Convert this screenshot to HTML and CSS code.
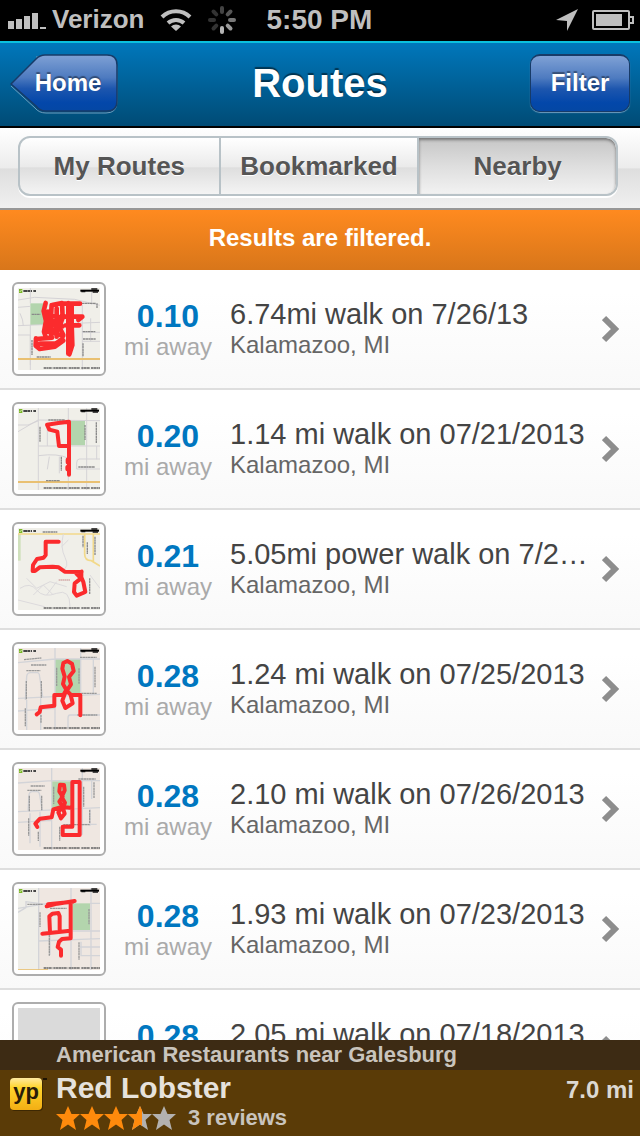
FILE: index.html
```html
<!DOCTYPE html>
<html lang="en">
<head>
    <meta charset="UTF-8">
    <meta name="viewport" content="width=device-width, initial-scale=1.0">
    <title>Routes</title>
    <link rel="stylesheet" href="styles.css">
</head>
<body>
    <svg class="defs" aria-hidden="true">
        <defs>
            <linearGradient id="homeFill" x1="0" y1="0" x2="0" y2="1">
                <stop offset="0" stop-color="#7fa1d5"/>
                <stop offset="0.4" stop-color="#4e7bc0"/>
                <stop offset="0.6" stop-color="#1d56ae"/>
                <stop offset="0.85" stop-color="#0347aa"/>
                <stop offset="1" stop-color="#0447a4"/>
            </linearGradient>
            <linearGradient id="ypFill" x1="0" y1="0" x2="0" y2="1">
                <stop offset="0" stop-color="#ffe9a0"/>
                <stop offset="0.3" stop-color="#ffd52c"/>
                <stop offset="1" stop-color="#f3ae14"/>
            </linearGradient>
            <symbol id="chevron" viewBox="0 0 18 28">
                <path d="M2 3l11 11L2 25" fill="none" stroke="#8d8d8d" stroke-width="6"/>
            </symbol>
            <symbol id="star" viewBox="0 0 24 24">
                <path d="M12 0l3.500 8H24l-6.500 6L20 24l-8-5.500L4 24l2.500-10L0 8h8.500z"/>
            </symbol>
            <!-- logo, scale bar and credit line shared by all map thumbs -->
            <symbol id="mapMarks" viewBox="54 39 246 246">
                <rect x="57" y="42" width="10" height="12" fill="#7cb928"/>
                <path d="M59 51l6-6" stroke="#fff" stroke-width="2"/>
                <path d="M70 48h38" stroke="#444" stroke-width="6" stroke-dasharray="12 1 8 2 3 4"/>
                <path d="M241 47h56" stroke="#000" stroke-width="6"/>
                <path d="M244 50h12m18-8h18m-14 9h16" stroke="#111" stroke-width="4"/>
                <path d="M131 279h26m3 0h42m4 0h34m4 0h26m3 0h27" stroke="#666" stroke-width="5" stroke-dasharray="7 1"/>
            </symbol>
        </defs>
    </svg>

    <div class="status">
        <svg class="signal" viewBox="0 0 38 16" width="38" height="16"><path d="M0 8h6v8H0zM8 6h6v10H8zM16 3h6v13h-6zM24 0h6v16h-6zM32 14h6v2h-6z" fill="#bfbfbf"/></svg>
        <span class="carrier">Verizon</span>
        <svg class="wifi" viewBox="0 0 32 24" width="32" height="24" fill="none" stroke="#bfbfbf" stroke-width="4"><path d="M2 9a20 20 0 0 1 28 0M8 15a12 12 0 0 1 16 0"/><path d="M16 23l-5-4.500a7 7 0 0 1 10 0z" fill="#bfbfbf" stroke="none"/></svg>
        <svg class="spinner" viewBox="-14 -14 28 28" width="28" height="28" stroke-width="4" stroke-linecap="round">
            <path d="M0-8v-4" stroke="#444"/>
            <path d="M5.700-5.700l2.800-2.800" stroke="#555"/>
            <path d="M8 0h4" stroke="#777"/>
            <path d="M5.700 5.700l2.800 2.800" stroke="#999"/>
            <path d="M0 8v4" stroke="#b5b5b5"/>
            <path d="M-5.700 5.700l-2.800 2.800" stroke="#333"/>
            <path d="M-8 0h-4" stroke="#333"/>
            <path d="M-5.700-5.700l-2.800-2.800" stroke="#333"/>
        </svg>
        <span class="clock">5:50 PM</span>
        <svg class="location" viewBox="0 0 24 24" width="24" height="24"><path d="M23 1L12 23V13L1 12z" fill="#bfbfbf"/></svg>
        <svg class="battery" viewBox="0 0 42 20" width="42" height="20"><rect x="1" y="1" width="36" height="18" rx="1" fill="none" stroke="#bfbfbf" stroke-width="2"/><path d="M4 4h26v12H4z" fill="#bfbfbf"/><path d="M38 7h3v6h-3" fill="none" stroke="#bfbfbf" stroke-width="2"/></svg>
    </div>

    <header class="navbar">
        <button class="nav-button home">
            <svg class="home-shape" viewBox="0 0 108 60" width="108" height="60"><path d="M26 3h70q11 0 11 11v34q0 11-11 11H36q-7 0-11-5L1 32" fill="none" stroke="#6f9dbd" stroke-width="1"/><path d="M35 1h62q10 0 10 10v36q0 10-10 10H35q-5 0-9-5L1 30 26 5q4-4 9-4z" fill="url(#homeFill)" stroke="#173b68" stroke-width="1.500"/></svg>
            <span>Home</span>
        </button>
        <h1>Routes</h1>
        <button class="nav-button filter">Filter</button>
    </header>

    <nav class="tabs">
        <div class="segments">
            <button>My Routes</button>
            <button>Bookmarked</button>
            <button class="active">Nearby</button>
        </div>
    </nav>

    <p class="banner">Results are filtered.</p>

    <ul class="routes">
        <li>
            <a class="route" href="#">
                <svg class="thumb" viewBox="54 39 246 246">
                    <path d="M54 39h246v246H54z" fill="#f0efe9"/>
                    <path d="M91 85h44v65H91z" fill="#b3d5ad"/>
                    <path d="M91 39v46m0 65v135M54 75l50-8 120 6 76 18M54 152l246-10M54 97l37-3M247 90v195M275 39v50M247 172h53M247 199h53M272 130v70M60 115q10 20 10 38M54 180h37v90" fill="none" stroke="#d5d3d6" stroke-width="3"/>
                    <path d="M54 252h246" stroke="#e9c071" stroke-width="6"/>
                    <path d="M95 118h26M246 85h42M248 170h38M249 192h38M110 246h42M96 195v45M249 205v40M291 85v14" stroke="#8a8a8a" stroke-width="4" stroke-dasharray="7 1"/>
                    <path d="M137 84l-6 24 7 30-6 32 6 18M155 90l-2 34v64M156 90l30-6 2 44-10 28 12 24-6 14-20 14M170 100v85M144 110v60M142 120l46 8-44 18 44 8-40 16 42 12M108 190l-1 22 12 10 46-7 25-18M110 192l46-4M120 206h44M205 84v152M192 86h48M195 125h52l-12 10M198 151h40M215 90v60l2 60-9 28" fill="none" stroke="#fb2b2d" stroke-width="14" stroke-linecap="round" stroke-linejoin="round"/>
                    <use href="#mapMarks" x="54" y="39" width="246" height="246"/>
                </svg>
                <span class="distance"><strong>0.10</strong><small>mi away</small></span>
                <span class="info"><b>6.74mi walk on 7/26/13</b><small>Kalamazoo, MI</small></span>
                <svg class="chevron"><use href="#chevron"/></svg>
            </a>
        </li>
        <li>
            <a class="route" href="#">
                <svg class="thumb" viewBox="54 39 246 246">
                    <path d="M54 39h246v246H54z" fill="#f0efe9"/>
                    <path d="M210 77h45v74h-45z" fill="#b3d5ad"/>
                    <path d="M115 39v246M54 110l60-35 186 2M54 90l30 0 30-12M205 39v246M260 39v246M115 153h185M115 182q60-8 90 8M142 85v68M178 185v50M290 153v40M148 185l-6 38M300 192h-62q-8 0-8 12v18h70" fill="none" stroke="#d5d3d6" stroke-width="3"/>
                    <path d="M54 261h246" stroke="#e9c071" stroke-width="6"/>
                    <path d="M145 75h50M120 95v45M255 90v45M289 82v62M184 185v42M235 216h50M138 257h42" stroke="#8a8a8a" stroke-width="4" stroke-dasharray="7 1"/>
                    <path d="M207 155V80l-32 4-34 5 7 15 24 6 5 43h30v86" fill="none" stroke="#fb2b2d" stroke-width="12" stroke-linecap="round" stroke-linejoin="round"/>
                    <path d="M205 195v6m-1 16v4" stroke="#fb2b2d" stroke-width="16" stroke-linecap="round"/>
                    <use href="#mapMarks" x="54" y="39" width="246" height="246"/>
                </svg>
                <span class="distance"><strong>0.20</strong><small>mi away</small></span>
                <span class="info"><b>1.14 mi walk on 07/21/2013</b><small>Kalamazoo, MI</small></span>
                <svg class="chevron"><use href="#chevron"/></svg>
            </a>
        </li>
        <li>
            <a class="route" href="#">
                <svg class="thumb" viewBox="54 39 246 246">
                    <path d="M54 39h246v246H54z" fill="#f0efe9"/>
                    <path d="M54 57h8v80h-8z" fill="#cfe0bb"/>
                    <path d="M54 57h246M254 57v60q0 20 20 20l26 16M280 57v85" fill="none" stroke="#f2d98a" stroke-width="5"/>
                    <path d="M60 220q30-20 50 5t60 10 40 40M80 190l30 30 40-20 50 15M54 255l80 20M190 57q-10 40 5 70t-10 40M205 75l-20 20M100 240l30-30 30 30M170 200l-30 40M270 180l30 40" fill="none" stroke="#dcdadc" stroke-width="3"/>
                    <path d="M128 51h44M249 62v35M262 82v35M285 65v56M269 190v48" stroke="#8a8a8a" stroke-width="4" stroke-dasharray="7 1"/>
                    <path d="M176 195h34" stroke="#c78a8a" stroke-width="3" stroke-dasharray="5 1"/>
                    <path d="M176 80h-39v40l-6 8-20 4-12 18-1 18h7l14-11 39-2 18 2 18 13 50 1v16l6 14 6 30-26 11-8-11 2-26 19-15-14-14 16-6" fill="none" stroke="#fb2b2d" stroke-width="12" stroke-linecap="round" stroke-linejoin="round"/>
                    <use href="#mapMarks" x="54" y="39" width="246" height="246"/>
                </svg>
                <span class="distance"><strong>0.21</strong><small>mi away</small></span>
                <span class="info"><b>5.05mi power walk on 7/24/13</b><small>Kalamazoo, MI</small></span>
                <svg class="chevron"><use href="#chevron"/></svg>
            </a>
        </li>
        <li>
            <a class="route" href="#">
                <svg class="thumb" viewBox="54 39 246 246">
                    <path d="M54 39h246v246H54z" fill="#efe7e1"/>
                    <path d="M165 72h75v106h-75z" fill="#b3d5ad"/>
                    <path d="M54 83l111-11h135M165 39v246M242 39v146M54 190l246-12M54 228l110-8M76 195l4-70q1-12 12-12h20q6 0 7 12l9 60M80 195v90M122 190v95M280 72v108M300 240h-90q-6 0-6 10v30" fill="none" stroke="#d3d4d8" stroke-width="4"/>
                    <path d="M72 74l52-5M93 90h46M79 107h42M240 67h50M170 98v56M237 100v46M285 95v62M79 138v56M124 138v50M76 220v54M123 240v24M244 175h46M232 240h60" stroke="#999" stroke-width="4" stroke-dasharray="7 1"/>
                    <path d="M241 241v-61h-29l6 25-22 14-9-22 8-22 18-27-6-22 14-18-5-22-14-8-12 6-3 17 7 24-5 22 12 21 12 12M200 163l-10 17h-27v32l-41 5-3 14-9 7" fill="none" stroke="#fb2b2d" stroke-width="12" stroke-linecap="round" stroke-linejoin="round"/>
                    <use href="#mapMarks" x="54" y="39" width="246" height="246"/>
                </svg>
                <span class="distance"><strong>0.28</strong><small>mi away</small></span>
                <span class="info"><b>1.24 mi walk on 07/25/2013</b><small>Kalamazoo, MI</small></span>
                <svg class="chevron"><use href="#chevron"/></svg>
            </a>
        </li>
        <li>
            <a class="route" href="#">
                <svg class="thumb" viewBox="54 39 246 246">
                    <path d="M54 39h246v246H54z" fill="#efe7e1"/>
                    <path d="M155 79h58v80h-58z" fill="#b3d5ad"/>
                    <path d="M54 84l101-7h145M155 39v246M247 39v200M54 170l246-12M54 202l100-6M84 170l3-50q1-10 10-10h15q6 0 7 10l8 48M90 175v90M120 170v105M275 77v55M270 162v50M290 208h-50" fill="none" stroke="#d3d4d8" stroke-width="4"/>
                    <path d="M92 93h42M82 106h42M235 72h52M161 95v52M251 95v60M282 82v48M88 122v48M125 122v44M86 190v52M115 230v28M269 165v40M179 215v42M190 209h80" stroke="#999" stroke-width="4" stroke-dasharray="7 1"/>
                    <path d="M112 216l-6-10 14-15 35-4 5-24 28-8-10-15 10-15-10-16 2-20 12 1 2 16-9 20 10 17-6 17 5 16-11 14-8-18 12-16 30 3V81h22v159h-51v-25h29v-54" fill="none" stroke="#fb2b2d" stroke-width="12" stroke-linecap="round" stroke-linejoin="round"/>
                    <use href="#mapMarks" x="54" y="39" width="246" height="246"/>
                </svg>
                <span class="distance"><strong>0.28</strong><small>mi away</small></span>
                <span class="info"><b>2.10 mi walk on 07/26/2013</b><small>Kalamazoo, MI</small></span>
                <svg class="chevron"><use href="#chevron"/></svg>
            </a>
        </li>
        <li>
            <a class="route" href="#">
                <svg class="thumb" viewBox="54 39 246 246">
                    <path d="M54 39h246v246H54z" fill="#efe7e1"/>
                    <path d="M54 39h64v246H54z" fill="#efeee8"/>
                    <path d="M218 85h52v80h-52z" fill="#b3d5ad"/>
                    <path d="M54 112l24-14 0-18 60 8 78-3M54 100l84-14M116 39v246M213 39v246M273 39v246M116 198l184-7M300 85h-30M300 168h-82M240 216h60M243 200v42h57M150 180v60" fill="none" stroke="#d3d4d8" stroke-width="4"/>
                    <path d="M54 284h90" stroke="#e9c071" stroke-width="3"/>
                    <path d="M82 88h46M150 100h50M120 112v44M267 102v46M148 180v62M237 202v52" stroke="#999" stroke-width="4" stroke-dasharray="7 1"/>
                    <path d="M140 94l32-8 52-8M144 88l75-8M212 82v108l-26 2-9 8-4 16 10 8v18M127 176l84-9M150 172l-2-48 9-8 18-2 4 10v40" fill="none" stroke="#fb2b2d" stroke-width="12" stroke-linecap="round" stroke-linejoin="round"/>
                    <use href="#mapMarks" x="54" y="39" width="246" height="246"/>
                </svg>
                <span class="distance"><strong>0.28</strong><small>mi away</small></span>
                <span class="info"><b>1.93 mi walk on 07/23/2013</b><small>Kalamazoo, MI</small></span>
                <svg class="chevron"><use href="#chevron"/></svg>
            </a>
        </li>
        <li>
            <a class="route" href="#">
                <svg class="thumb" viewBox="54 39 246 246"><path d="M54 39h246v246H54z" fill="#dadada"/></svg>
                <span class="distance"><strong>0.28</strong><small>mi away</small></span>
                <span class="info"><b>2.05 mi walk on 07/18/2013</b><small>Kalamazoo, MI</small></span>
                <svg class="chevron"><use href="#chevron"/></svg>
            </a>
        </li>
    </ul>

    <a class="ad" href="#">
        <span class="ad-heading">American Restaurants near Galesburg</span>
        <span class="ad-body">
            <svg class="yp" viewBox="0 0 40 36" width="40" height="36">
                <rect x="1" y="2" width="32" height="32" rx="4" fill="#3d2803"/>
                <rect x="0" y="1" width="32" height="32" rx="4" fill="url(#ypFill)"/>
                <text x="16" y="22" text-anchor="middle" class="yp-text">yp</text>
                <path d="M33 2h4" stroke="#1d1303" stroke-width="2"/>
            </svg>
            <span class="ad-text">
                <span class="ad-name">Red Lobster</span>
                <span class="ad-rating">
                    <svg viewBox="0 0 120 24" width="120" height="24">
                        <g fill="#ff8a0c">
                            <use href="#star" width="24" height="24"/>
                            <use href="#star" x="24" width="24" height="24"/>
                            <use href="#star" x="48" width="24" height="24"/>
                        </g>
                        <use href="#star" x="72" width="24" height="24" fill="#b3b1af"/>
                        <svg x="72" width="14" height="24" viewBox="0 0 14 24"><use href="#star" width="24" height="24" fill="#ff8a0c"/></svg>
                        <use href="#star" x="96" width="24" height="24" fill="#b3b1af"/>
                    </svg>
                    <span>3 reviews</span>
                </span>
            </span>
            <span class="ad-distance">7.0 mi</span>
        </span>
    </a>
</body>
</html>
```
FILE: styles.css
```css
* {
    box-sizing: border-box;
}
body {
    margin: 0;
    height: 100vh;
    display: flex;
    flex-direction: column;
    overflow: hidden;
    background: #fff;
    font-family: "Liberation Sans", Arial, sans-serif;
}
button {
    border: 0;
    padding: 0;
    background: none;
    font: bold 24px "Liberation Sans", Arial, sans-serif;
    cursor: pointer;
}
a {
    color: inherit;
    text-decoration: none;
}
.defs {
    position: absolute;
    width: 0;
    height: 0;
}

/* status bar */
.status {
    display: flex;
    align-items: center;
    flex: none;
    height: 41px;
    padding: 0 6px 2px 8px;
    background: #000;
    color: #bfbfbf;
    font-size: 26px;
    font-weight: bold;
}
.signal {
    margin-top: 2px;
}
.carrier {
    margin-left: 6px;
}
.wifi {
    margin-left: 16px;
}
.spinner {
    margin-left: 16px;
}
.clock {
    margin-left: 30px;
    font-size: 28px;
}
.location {
    margin-left: auto;
}
.battery {
    margin-left: 13px;
}

/* nav bar */
.navbar {
    display: grid;
    grid-template-columns: 108px 1fr 108px;
    align-items: start;
    flex: none;
    height: 87px;
    padding: 11px 10px 0;
    border-top: 2px solid #0bc0dd;
    border-bottom: 2px solid #000;
    background: linear-gradient(#0077bb, #004b75);
    color: #fff;
}
.navbar h1 {
    margin: 0;
    text-align: center;
    font-size: 40px;
    line-height: 58px;
    text-shadow: 0 -2px 1px rgba(0, 0, 0, 0.5);
}
.nav-button {
    position: relative;
    height: 58px;
    color: #fff;
    text-shadow: 0 -2px 1px rgba(0, 0, 0, 0.4);
}
.home {
    padding-left: 8px;
}
.home span {
    position: relative;
}
.home-shape {
    position: absolute;
    left: 0;
    top: 0;
}
.filter {
    justify-self: end;
    width: 100px;
    padding-bottom: 2px;
    border: 1px solid #173b68;
    border-top-width: 2px;
    border-radius: 10px;
    background: linear-gradient(#7fa1d5, #4e7bc0 40%, #1d56ae 60%, #0347aa 85%, #0447a4);
    box-shadow: 0 1px 1px #6f9dbd;
}

/* segmented tabs */
.tabs {
    flex: none;
    padding: 8px 22px 12px 18px;
    border-bottom: 2px solid #979797;
    background: linear-gradient(#fff, #ececec 50%, #dedede 51%, #f0f0f0);
}
.segments {
    display: grid;
    grid-template-columns: repeat(3, 1fr);
    height: 60px;
    border: 2px solid #b8c2c7;
    border-radius: 12px;
    background: linear-gradient(#fff, #eaeaea 52%, #dedede 53%, #f4f4f4);
    box-shadow: 0 2px 0 #fff;
    overflow: hidden;
}
.segments button {
    color: #555;
    font-size: 26px;
    text-shadow: 0 1px 0 #fff;
}
.segments button + button {
    border-left: 2px solid #b8c2c7;
}
.segments .active {
    background: linear-gradient(#c6c6c6, #dedede 50%, #f2f2f2);
    box-shadow: inset 0 2px 3px #777;
    border-radius: 0 10px 10px 0;
}

.banner {
    flex: none;
    margin: 0;
    background: linear-gradient(#ff8a1f, #d8761a);
    color: #fff;
    font-size: 24px;
    font-weight: bold;
    line-height: 56px;
    padding-bottom: 4px;
    text-align: center;
}

/* route list */
.routes {
    flex: 1;
    min-height: 0;
    margin: 0;
    padding: 0;
    list-style: none;
    overflow: hidden;
}
.route {
    display: grid;
    grid-template-columns: 94px 88px 1fr 18px;
    align-items: center;
    column-gap: 18px;
    height: 120px;
    padding: 0 20px 0 12px;
    border-bottom: 2px solid #dedede;
    background: linear-gradient(#fff, #fff 20%, #f9f9f9);
}
.thumb {
    width: 94px;
    height: 94px;
    padding: 4px;
    border: 2px solid #adadad;
    border-radius: 6px;
    background: #fff;
}
.route small {
    display: block;
    font-size: 24px;
    line-height: 30px;
}
.distance {
    padding-top: 4px;
    text-align: center;
    color: #aaa;
    white-space: nowrap;
}
.distance strong {
    display: block;
    color: #0077c0;
    font-size: 32px;
    line-height: 32px;
}
.info {
    min-width: 0;
    margin-right: -8px;
    color: #666;
}
.info b {
    display: block;
    overflow: hidden;
    color: #444;
    font-size: 29px;
    font-weight: normal;
    line-height: 32px;
    text-overflow: ellipsis;
    white-space: nowrap;
}
.chevron {
    width: 18px;
    height: 28px;
}

/* sponsored strip */
.ad {
    flex: none;
    background: #5a3b07;
    color: #c9c4bd;
    font-size: 22px;
    font-weight: bold;
}
.ad-heading {
    display: block;
    padding-left: 56px;
    background: #3d2b14;
    line-height: 30px;
}
.ad-body {
    display: grid;
    grid-template-columns: 46px 1fr auto;
    height: 66px;
    padding: 2px 6px 0 10px;
}
.yp {
    margin-top: 5px;
}
.yp-text {
    font-size: 22px;
    font-weight: bold;
    fill: #2a1d08;
}
.ad-name {
    display: block;
    color: #e6e2dc;
    font-size: 30px;
    line-height: 32px;
}
.ad-rating {
    display: flex;
    align-items: center;
    gap: 12px;
    line-height: 28px;
}
.ad-distance {
    color: #dcd8d2;
    font-size: 24px;
    line-height: 36px;
}
```
